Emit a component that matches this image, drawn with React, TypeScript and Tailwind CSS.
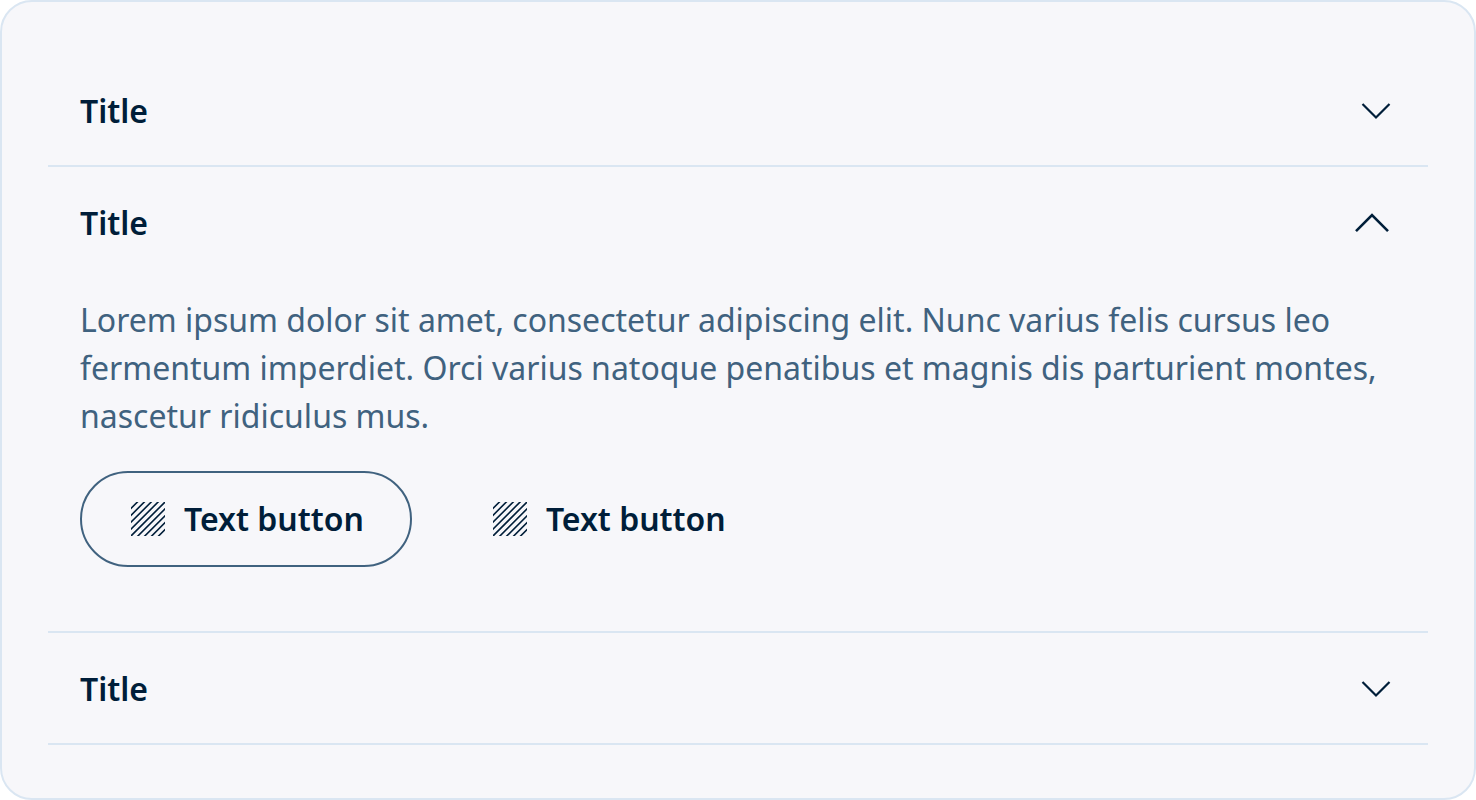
import { useState } from "react";
import type { ReactNode } from "react";

const ChevronDown = () => (
  <svg className="h-12 w-12 shrink-0" viewBox="0 0 48 48" fill="none" stroke="currentColor" strokeWidth="2.2">
    <path d="M14.5 17L28 30.5L41.5 17" />
  </svg>
);

const ChevronUp = () => (
  <svg className="h-12 w-12 shrink-0" viewBox="0 0 48 48" fill="none" stroke="currentColor" strokeWidth="2.6">
    <path d="M8 32.2L24 16.2L40 32.2" />
  </svg>
);

const HatchIcon = () => (
  <svg className="h-10 w-10 shrink-0" viewBox="0 0 40 40" fill="none" stroke="currentColor" strokeWidth="1.6">
    <svg x="3" y="3" width="34" height="34" viewBox="0 0 34 34">
      <path d="M-2 8.4L8.4 -2M-2 15.3L15.3 -2M-2 22.2L22.2 -2M-2 29.1L29.1 -2M-2 36L36 -2M4.9 36L36 4.9M11.8 36L36 11.8M18.7 36L36 18.7M25.6 36L36 25.6" />
    </svg>
  </svg>
);

interface AccordionItemProps {
  id: string;
  title: string;
  open: boolean;
  onToggle: () => void;
  children?: ReactNode;
}

const AccordionItem = ({ id, title, open, onToggle, children }: AccordionItemProps) => (
  <section className="border-b-2 border-[#dae6f2]">
    <h3>
      <button
        type="button"
        aria-expanded={open}
        aria-controls={id}
        onClick={onToggle}
        className="flex w-full items-center justify-between px-8 pt-8 pb-[30px] text-left text-[32px] leading-[48px] font-semibold"
      >
        {title}
        {open ? <ChevronUp /> : <ChevronDown />}
      </button>
    </h3>
    {open && (
      <div id={id} className="px-8 pt-[19px] pb-16">
        {children}
      </div>
    )}
  </section>
);

const PanelContent = () => (
  <>
    <p className="text-[32px] leading-[48px] text-[#40627f]">
      Lorem ipsum dolor sit amet, consectetur adipiscing elit. Nunc varius felis cursus leo fermentum imperdiet.
      Orci varius natoque penatibus et magnis dis parturient montes, nascetur ridiculus mus.
    </p>
    <div className="mt-[31px] flex flex-wrap gap-[30px] text-[32px] leading-[48px] font-semibold">
      <button type="button" className="flex items-center gap-4 rounded-full border-2 border-[#40627f] px-[46px] py-[22px]">
        <HatchIcon />
        Text button
      </button>
      <button type="button" className="flex items-center gap-4 rounded-full border-2 border-transparent px-[46px] py-[22px]">
        <HatchIcon />
        Text button
      </button>
    </div>
  </>
);

export default function App() {
  const [openItem, setOpenItem] = useState<number | null>(1);

  return (
    <main className="rounded-[32px] border-2 border-[#dae6f2] bg-[#f7f7fa] px-[46px] py-[53px] font-['Noto_Sans',sans-serif] text-[#001e39]">
      {[0, 1, 2].map((i) => (
        <AccordionItem
          key={i}
          id={`panel-${i}`}
          title="Title"
          open={openItem === i}
          onToggle={() => setOpenItem(openItem === i ? null : i)}
        >
          <PanelContent />
        </AccordionItem>
      ))}
    </main>
  );
}
